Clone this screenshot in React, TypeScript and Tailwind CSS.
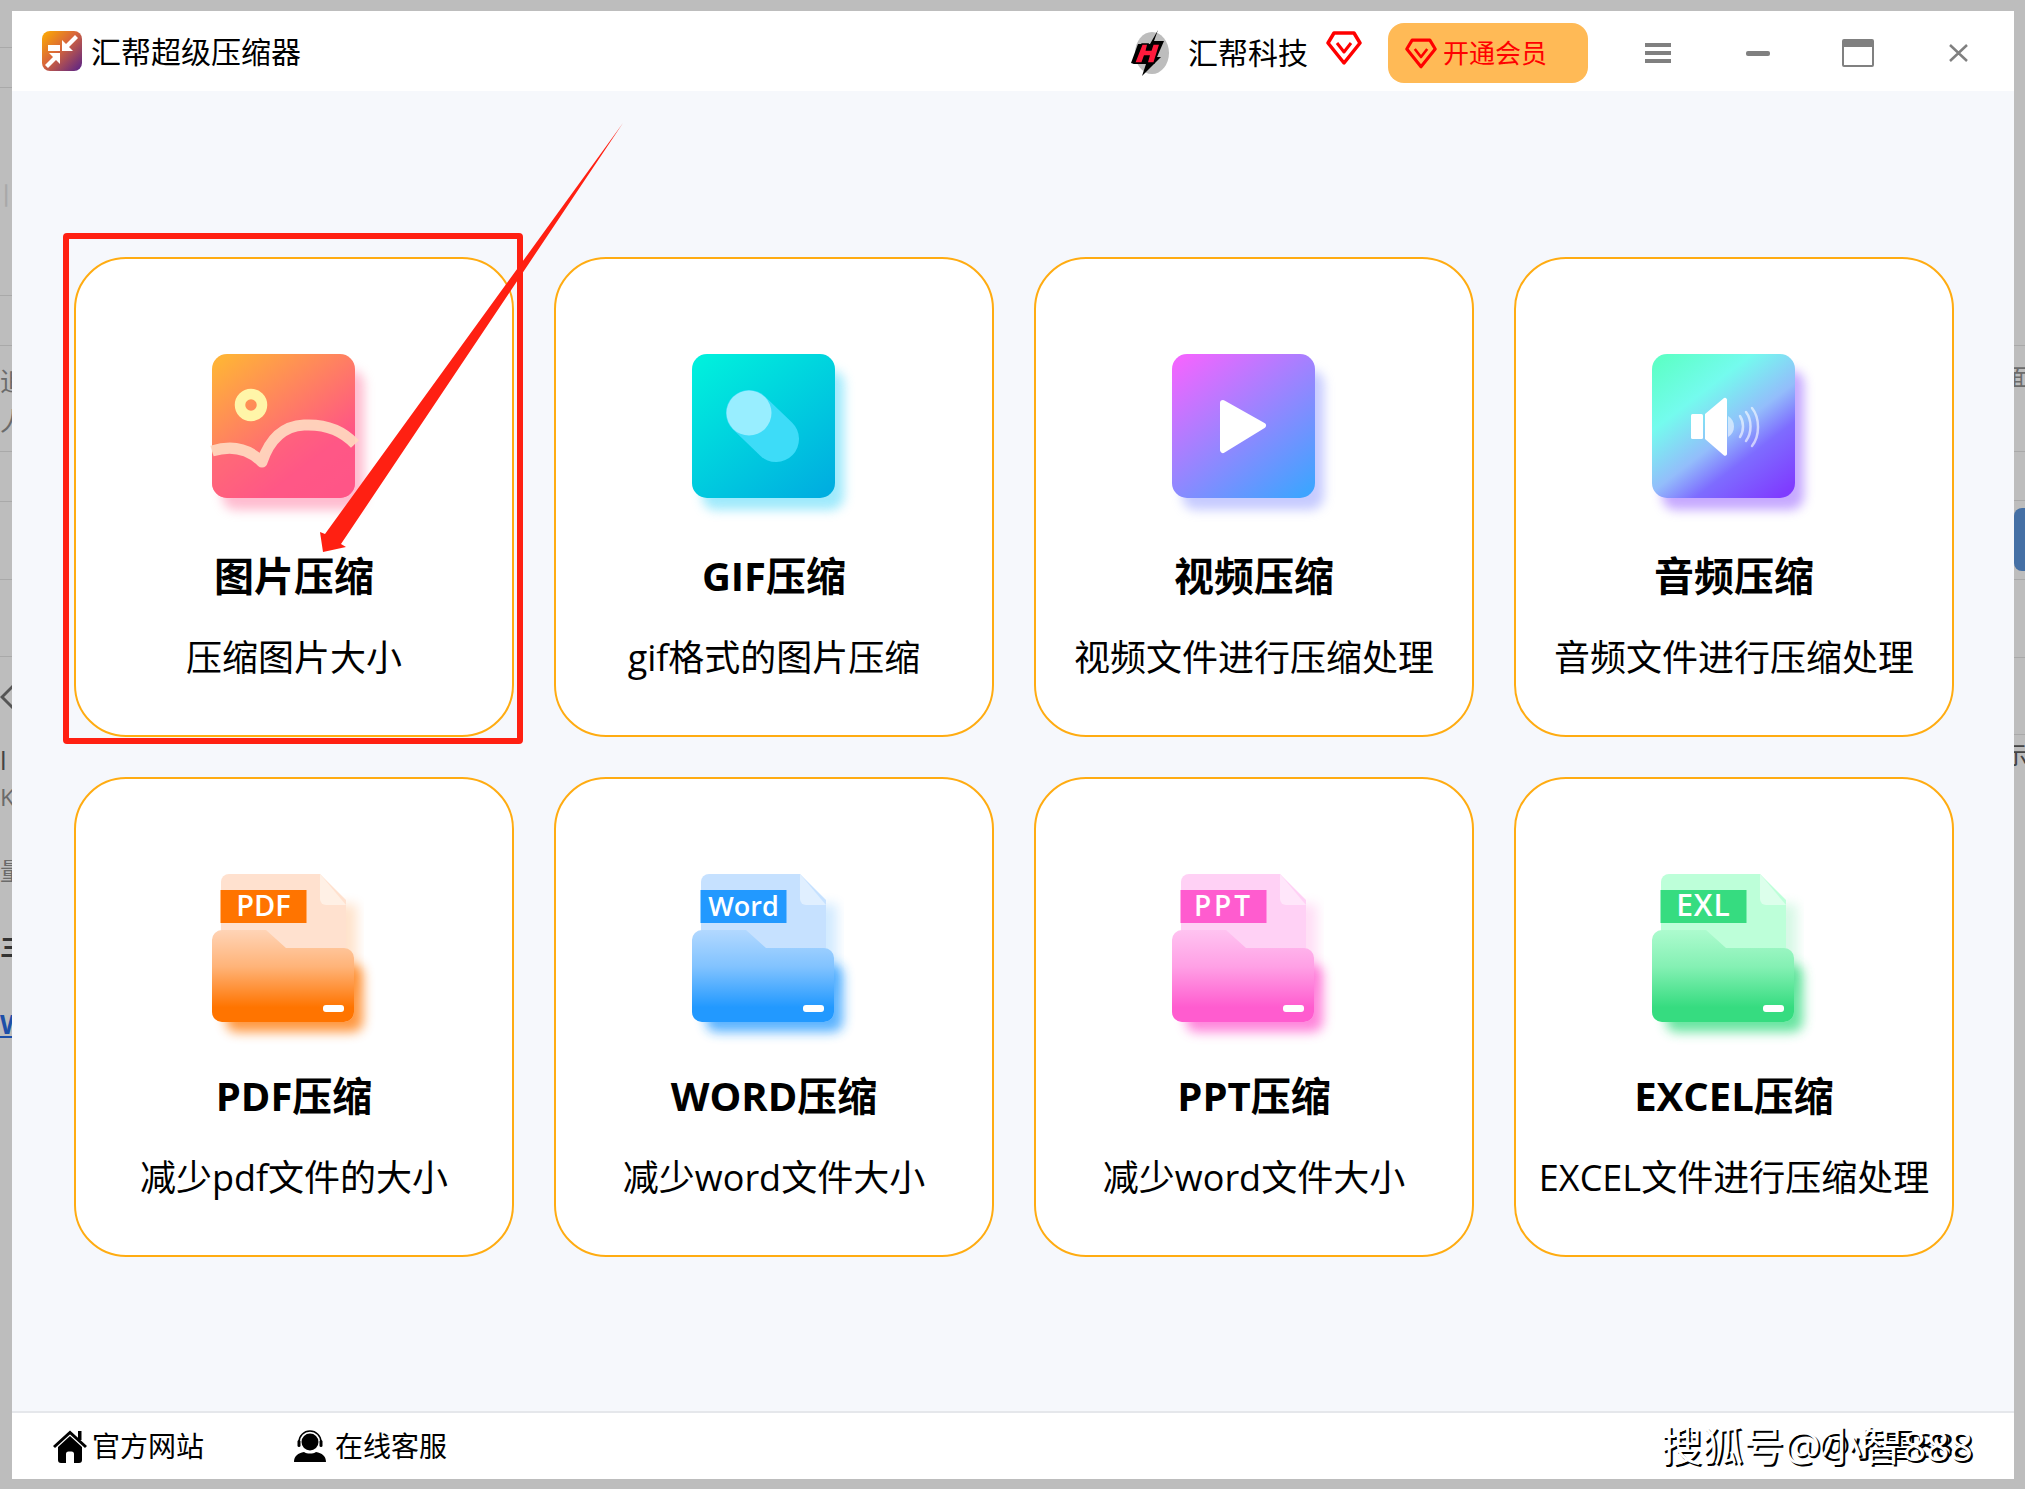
import { ReactNode } from "react"

// card data, icons are drawn in a 143x148 box
const folderPath =
    "M0 66a10 10 0 0 1 10-10H54L74 74H132a10 10 0 0 1 10 10V138a10 10 0 0 1-10 10H10a10 10 0 0 1-10-10Z"

const fileIcon = (id: string, doc: string, corner: string, main: string, label: string, size = 29, spacing = 0) => (
    <svg width="143" height="148" viewBox="0 0 143 148" className="overflow-visible">
        <defs>
            <linearGradient id={id} x1="0" y1="0" x2="0" y2="1">
                <stop offset="0" stopColor={main} stopOpacity="0.12" />
                <stop offset="0.4" stopColor={main} stopOpacity="0.42" />
                <stop offset="0.84" stopColor={main} stopOpacity="1" />
                <stop offset="1" stopColor={main} stopOpacity="1" />
            </linearGradient>
            <filter id={id + "-b"} x="-30%" y="-30%" width="160%" height="160%">
                <feGaussianBlur stdDeviation="6" />
            </filter>
        </defs>
        <path d="M122 30H145V120H122Z" fill={main} opacity="0.2" filter={`url(#${id}-b)`} />
        <rect x="14" y="90" width="137" height="68" rx="10" fill={main} opacity="0.75" filter={`url(#${id}-b)`} />
        <path d="M9 8a8 8 0 0 1 8-8H108L134 26V100H9Z" fill={doc} />
        <path d="M108 0L134 31H114a6 6 0 0 1-6-6Z" fill={corner} />
        <rect x="8.500" y="16" width="86" height="33" fill={main} />
        <text
            x="51.500"
            y="42"
            textAnchor="middle"
            fill="#fff"
            fontSize={size}
            fontWeight="600"
            letterSpacing={spacing}
            fontFamily="'Open Sans', sans-serif"
        >
            {label}
        </text>
        <path d={folderPath} fill={doc} />
        <path d={folderPath} fill={`url(#${id})`} />
        <rect x="111" y="131" width="21" height="7" rx="3" fill="#fff" />
    </svg>
)

const squareIcon = (id: string, stops: [number, string][], shadow: string, inner: ReactNode) => (
    <svg width="143" height="148" viewBox="0 0 143 148" className="overflow-visible">
        <defs>
            <linearGradient id={id} x1="0.12" y1="0" x2="0.88" y2="1">
                {stops.map(([o, c]) => (
                    <stop key={o} offset={o} stopColor={c} />
                ))}
            </linearGradient>
            <filter id={id + "-b"} x="-30%" y="-30%" width="160%" height="160%">
                <feGaussianBlur stdDeviation="5.500" />
            </filter>
        </defs>
        <rect x="10" y="16" width="142" height="140" rx="14" fill={shadow} opacity="0.6" filter={`url(#${id}-b)`} />
        <rect width="143" height="144" rx="15" fill={`url(#${id})`} />
        {inner}
    </svg>
)

const cards = [
    {
        title: "图片压缩",
        sub: "压缩图片大小",
        icon: squareIcon(
            "img",
            [[0, "#ffb238"], [0.75, "#ff5585"], [1, "#ff5088"]],
            "#ff8fb0",
            <>
                <path d="M0 100C16 94 34 94 50 110C58 86 72 74 92 73C112 72 130 78 143 92V129a15 15 0 0 1-15 15H15a15 15 0 0 1-15-15Z" fill="#ff5a86" opacity="0.55" />
                <path d="M0 97C16 92 34 92 50 108C58 84 72 72 92 71C112 70 130 76 143 90" fill="none" stroke="#ffd9c0" strokeOpacity="0.92" strokeWidth="11" strokeLinejoin="round" />
                <circle cx="39" cy="51" r="11" fill="none" stroke="#fff5a8" strokeWidth="10.500" />
            </>
        ),
    },
    {
        title: "GIF压缩",
        sub: "gif格式的图片压缩",
        icon: squareIcon(
            "gif",
            [[0, "#00efdd"], [1, "#00aee0"]],
            "#5fdcfa",
            <>
                <path d="M57 59L84 85" stroke="#3ddcf8" strokeWidth="46" strokeLinecap="round" />
                <circle cx="57" cy="59" r="22.500" fill="#98eeff" />
            </>
        ),
    },
    {
        title: "视频压缩",
        sub: "视频文件进行压缩处理",
        icon: squareIcon(
            "vid",
            [[0, "#f066ff"], [1, "#3fa4ff"]],
            "#a0a8ff",
            <path d="M51 49L91 71.500L51 96Z" fill="#fff" stroke="#fff" strokeWidth="6" strokeLinejoin="round" />
        ),
    },
    {
        title: "音频压缩",
        sub: "音频文件进行压缩处理",
        icon: squareIcon(
            "aud",
            [[0, "#5effc8"], [0.28, "#74fbee"], [0.55, "#93bdfb"], [0.72, "#7e6cff"], [1, "#7f3cff"]],
            "#a070ff",
            <>
                <rect x="39" y="60" width="12" height="25" rx="1.500" fill="#fff" />
                <path d="M53 60L72 44a2 2 0 0 1 3 1.500V100a2 2 0 0 1-3 1.500L53 85Z" fill="#fff" />
                <path d="M76 62C84 66 84 79 76 83Z" fill="#fff" opacity="0.55" />
                <path d="M88 62C92 68 92 77 88 83M94 58C100 66 100 79 94 87M100 54C108 64 108 82 100 92" fill="none" stroke="#fff" strokeOpacity="0.6" strokeWidth="2.500" strokeLinecap="round" />
            </>
        ),
    },
    { title: "PDF压缩", sub: "减少pdf文件的大小", icon: fileIcon("pdf", "#ffe1cf", "#fff0e5", "#ff7400", "PDF") },
    { title: "WORD压缩", sub: "减少word文件大小", icon: fileIcon("word", "#c6e1ff", "#e0efff", "#2299ff", "Word", 27) },
    { title: "PPT压缩", sub: "减少word文件大小", icon: fileIcon("ppt", "#ffd1f5", "#ffe6fa", "#ff5ccf", "PPT", 28, 3) },
    { title: "EXCEL压缩", sub: "EXCEL文件进行压缩处理", icon: fileIcon("exl", "#bdffd9", "#dcffeb", "#36dc80", "EXL", 30, 1) },
]

const leftLines = [47, 87, 295, 345, 451, 501, 579, 656]
const rightLines = [345, 451, 500, 579, 657, 734]

function VipMark({ className }: { className: string }) {
    return (
        <svg viewBox="0 0 36 34" className={className} fill="none" stroke="#ff0000" strokeLinejoin="round">
            <path d="M8 2H28L34 12L18 32L2 12Z" strokeWidth="3.500" />
            <path d="M11 12L18 21L25 12" strokeWidth="3" />
        </svg>
    )
}

function AppLogo() {
    return (
        <svg width="40" height="40" viewBox="0 0 40 40" className="flex-none">
            <defs>
                <linearGradient id="logo" x1="0" y1="0" x2="1" y2="1">
                    <stop offset="0" stopColor="#ffae00" />
                    <stop offset="0.45" stopColor="#d8663a" />
                    <stop offset="1" stopColor="#55208a" />
                </linearGradient>
            </defs>
            <rect width="40" height="40" rx="8" fill="url(#logo)" />
            <path d="M20 9V20H31L27 16L36 7L33 4L24 13Z" fill="#fff" />
            <path d="M18 22V33L14 29L6 37L3 34L11 26L7 22Z" fill="#fff" />
            <rect x="6" y="14" width="12" height="6" fill="#fff" />
        </svg>
    )
}

function BrandLogo() {
    return (
        <svg width="42" height="48" viewBox="0 0 42 48" className="flex-none">
            <ellipse cx="24" cy="24" rx="17" ry="21" fill="#bdbdbd" />
            <path d="M30 1L26 12H36L29 28H33L14 47L18 35H6L3 34L10 15H22Z" fill="#000" />
            <path d="M14 15H20L18.500 21H23L25 15H32L26 34H19L21 27H16.500L14 34H6.500Z" fill="#ff1a3c" stroke="#000" strokeWidth="1.500" />
        </svg>
    )
}

function HomeIcon() {
    return (
        <svg width="34" height="33" viewBox="0 0 34 33" className="flex-none">
            <path d="M1 17L17 2.500L33 17" fill="none" stroke="#000" strokeWidth="3" />
            <rect x="25" y="1" width="3.500" height="9" />
            <path d="M5 17L17 6L29 17V30a3 3 0 0 1-3 3H21V24a2.500 2.500 0 0 0-2.500-2.500H15.500A2.500 2.500 0 0 0 13 24V33H8a3 3 0 0 1-3-3Z" />
        </svg>
    )
}

function ServiceIcon() {
    return (
        <svg width="32" height="32" viewBox="0 0 32 32" className="flex-none">
            <circle cx="16" cy="12" r="8.500" />
            <path d="M5 14V12a11 11 0 0 1 22 0V14" fill="none" stroke="#000" strokeWidth="1.500" />
            <rect x="3.500" y="10" width="3" height="7" rx="1.500" />
            <rect x="25.500" y="10" width="3" height="7" rx="1.500" />
            <path d="M0 32C0 26 4 23 10 22C13 24 19 24 22 22C28 23 32 26 32 32Z" />
        </svg>
    )
}

export default function App() {
    return (
        <div className="relative w-[2025px] h-[1489px] overflow-hidden bg-[#bdbdbd] text-black [font-family:'Open_Sans','Noto_Sans_CJK_SC',sans-serif]">
            {/* what shows of the page behind the window */}
            <div className="absolute left-0 top-0 h-full w-[12px] overflow-hidden text-[#6b6b6b]">
                {leftLines.map((y) => (
                    <div key={y} className="absolute left-0 w-full h-px bg-[#a9a9a9]" style={{ top: y }} />
                ))}
                <span className="absolute left-[-16px] top-[178px] text-[26px] leading-[34px] text-[#a8a8a8]">川</span>
                <span className="absolute left-0 top-[365px] text-[26px] leading-[32px]">追</span>
                <span className="absolute left-0 top-[405px] text-[26px] leading-[32px]">人</span>
                <svg width="12" height="30" viewBox="0 0 12 30" className="absolute left-0 top-[682px]" fill="none" stroke="#555" strokeWidth="3">
                    <path d="M14 3L2 15L14 27" />
                </svg>
                <span className="absolute left-0 top-[744px] text-[26px] leading-[32px] text-[#444]">l</span>
                <span className="absolute left-0 top-[782px] text-[24px] leading-[30px]">K</span>
                <span className="absolute left-0 top-[856px] text-[24px] leading-[30px]">量</span>
                <span className="absolute left-0 top-[932px] text-[24px] leading-[30px] font-bold text-[#333]">三</span>
                <span className="absolute left-0 top-[1008px] text-[26px] leading-[32px] font-bold text-[#1d4fa8] underline">W</span>
            </div>
            <div className="absolute right-0 top-0 h-full w-[11px] overflow-hidden text-[#6b6b6b]">
                {rightLines.map((y) => (
                    <div key={y} className="absolute left-0 w-full h-px bg-[#a9a9a9]" style={{ top: y }} />
                ))}
                <span className="absolute left-[-8px] top-[362px] text-[24px] leading-[30px]">面</span>
                <span className="absolute left-0 top-[508px] w-[20px] h-[63px] rounded-l-[8px] bg-[#4570a5]" />
                <span className="absolute left-[-10px] top-[740px] text-[24px] leading-[30px] text-[#444]">示</span>
            </div>

            <div className="absolute left-[12px] top-[11px] flex flex-col w-[2002px] h-[1468px] bg-[#f6f8fc]">
                {/* title bar */}
                <header className="flex items-center flex-none h-[80px] bg-white pl-[30px] pr-[45px]">
                    <AppLogo />
                    <span className="ml-[9px] mt-[2px] text-[30px] leading-[40px]">汇帮超级压缩器</span>
                    <div className="ml-auto mt-[4px] flex items-center">
                        <BrandLogo />
                        <span className="ml-[18px] text-[30px] leading-[40px]">汇帮科技</span>
                        <VipMark className="ml-[18px] w-[36px] h-[34px] -mt-[10px]" />
                        <button className="ml-[26px] flex items-center w-[200px] h-[60px] pl-[17px] rounded-[16px] bg-[#ffba56] text-[26px] text-[#ff0000]">
                            <VipMark className="w-[32px] h-[31px] flex-none" />
                            <span className="ml-[6px] leading-[36px]">开通会员</span>
                        </button>
                        <div className="ml-[57px] flex flex-col gap-[4px] w-[26px]">
                            <div className="h-[4px] bg-[#808080]" />
                            <div className="h-[4px] bg-[#808080]" />
                            <div className="h-[4px] bg-[#808080]" />
                        </div>
                        <div className="ml-[75px] w-[24px] h-[5px] rounded-[2px] bg-[#808080]" />
                        <div className="ml-[72px] w-[32px] h-[28px] rounded-[2px] border-2 border-[#808080] border-t-[8px]" />
                        <svg width="21" height="18" viewBox="0 0 21 18" className="ml-[74px]" stroke="#808080" strokeWidth="2.500" fill="none">
                            <path d="M2 1L19 17M19 1L2 17" />
                        </svg>
                    </div>
                </header>

                {/* tool cards */}
                <main className="flex-1 pl-[62px] pt-[166px]">
                    <div className="grid grid-cols-[repeat(4,440px)] gap-x-[40px] gap-y-[40px]">
                        {cards.map((card) => (
                            <div
                                key={card.title}
                                className="flex flex-col items-center h-[480px] pt-[95px] bg-white border-2 border-[#ffac12] rounded-[52px]"
                            >
                                <div className="self-start ml-[136px] h-[148px]">{card.icon}</div>
                                <h3 className="mt-[49px] text-[40px] leading-[50px] font-bold">{card.title}</h3>
                                <p className="mt-[32px] text-[36px] leading-[50px] whitespace-nowrap">{card.sub}</p>
                            </div>
                        ))}
                    </div>
                </main>

                {/* footer */}
                <footer className="flex items-center flex-none h-[68px] bg-white border-t-2 border-[#e5e7eb] pl-[41px] pr-[41px] text-[28px]">
                    <HomeIcon />
                    <span className="ml-[5px] leading-[36px]">官方网站</span>
                    <div className="ml-[90px]">
                        <ServiceIcon />
                    </div>
                    <span className="ml-[9px] leading-[36px]">在线客服</span>
                    <div className="relative ml-auto whitespace-nowrap">
                        <span className="absolute right-0 top-[4px] text-[33px] leading-[40px] text-black">@小雪888</span>
                        <span className="relative text-[41px] leading-[46px] text-white [text-shadow:2px_2px_0_#000]">搜狐号@小智888</span>
                    </div>
                </footer>
            </div>

            {/* red annotation on top of the window */}
            <div className="absolute left-[63px] top-[233px] w-[460px] h-[511px] border-[6px] border-[#ff2012] rounded-[4px] pointer-events-none" />
            <svg width="2025" height="1489" viewBox="0 0 2025 1489" className="absolute left-0 top-0 pointer-events-none">
                <path d="M623 123L341 544L346 547L323 552L320 532L325 534Z" fill="#ff2012" />
            </svg>
        </div>
    )
}
